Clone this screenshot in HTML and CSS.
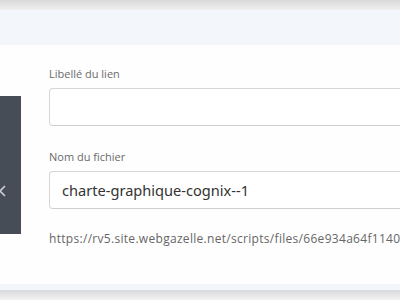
FILE: index.html
```html
<!DOCTYPE html>
<html>
<head>
    <title>Fichier</title>
    <link rel="stylesheet" href="styles.css">
</head>
<body>
    <div class="shade"></div>
    <div class="modal">
        <div class="modal-head"></div>
        <div class="modal-body">
            <div class="preview">
                <svg class="close" width="12" height="12" viewBox="0 0 12 12">
                    <path d="M1 1L11 11M11 1L1 11" stroke="#c9ccd1" stroke-width="1.6" fill="none"/>
                </svg>
            </div>
            <div class="fields">
                <label class="label">Libellé du lien</label>
                <input class="field" type="text" value="">
                <label class="label second">Nom du fichier</label>
                <input class="field" type="text" value="charte-graphique-cognix--1">
                <p class="url">https://rv5.site.webgazelle.net/scripts/files/66e934a64f1140</p>
            </div>
        </div>
        <div class="modal-foot"></div>
    </div>
    <div class="shade bottom"></div>
</body>
</html>
```

FILE: styles.css
```css
body {
    margin: 0;
    width: 400px;
    height: 300px;
    overflow: hidden;
    background-color: #fff;
    font-family: 'Open Sans', sans-serif;
}

.shade {
    height: 10px;
    background: linear-gradient(#d9d9d9, #e6e6e6 60%, #f0f0f0);
}

.shade.bottom {
    height: 10px;
    background: linear-gradient(#d8d9db, #e9e9ea 60%, #f2f2f2);
}

.modal-head {
    height: 35px;
    background-color: #f3f6fb;
}

.modal-body {
    display: flex;
    height: 239px;
    background-color: #fefefe;
    overflow: hidden;
}

.preview {
    flex: none;
    width: 42px;
    height: 138px;
    margin-left: -21px;
    margin-top: 51px;
    background-color: #464d57;
    display: flex;
    justify-content: center;
    padding-top: 89px;
    box-sizing: border-box;
}

.close {
    display: block;
}

.fields {
    flex: none;
    width: 420px;
    margin-left: 28px;
    padding-top: 21px;
    overflow: hidden;
}

.label {
    display: block;
    font-size: 11px;
    line-height: 16px;
    color: #6a6a6a;
    margin-bottom: 6px;
}

.label.second {
    margin-top: 23px;
}

.field {
    display: block;
    width: 100%;
    height: 38px;
    box-sizing: border-box;
    padding: 0 12px;
    border: 1px solid #d6d6d6;
    border-bottom-color: #cfcfcf;
    border-radius: 4px;
    background-color: #fff;
    font-family: 'Noto Sans', sans-serif;
    font-size: 14.6px;
    color: #333;
}

.url {
    margin: 22px 0 0;
    font-size: 12px;
    letter-spacing: 0.3px;
    line-height: 16px;
    color: #666;
    white-space: nowrap;
}

.modal-foot {
    height: 6px;
    background-color: #f3f6fb;
}
```
